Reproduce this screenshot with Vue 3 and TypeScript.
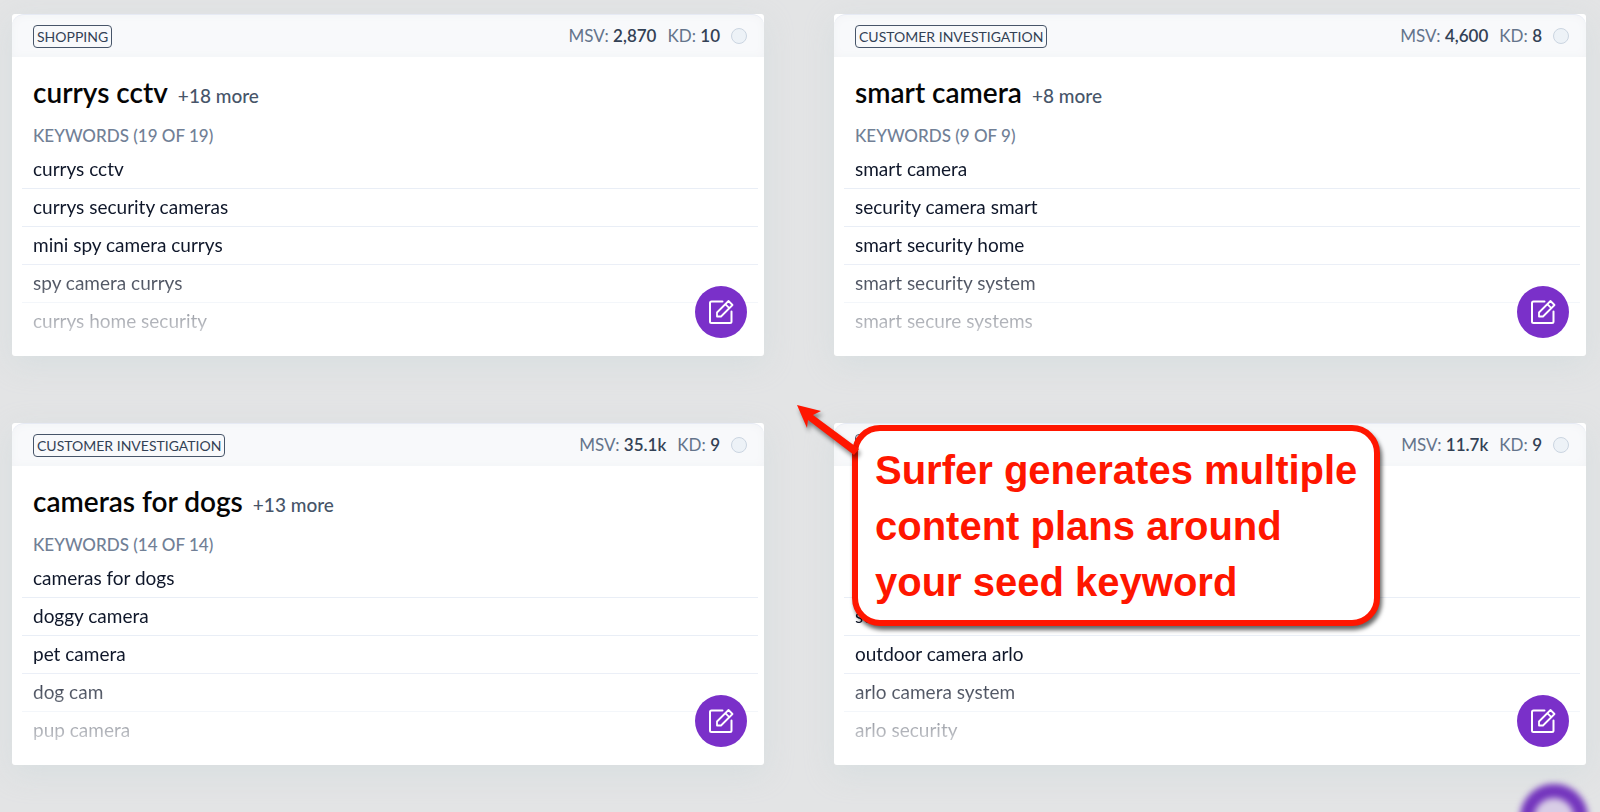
<script setup lang="ts">
interface Plan {
  id: number
  tag: string
  msv: string
  kd: string
  title: string
  more: string
  summary: string
  keywords: string[]
}

const plans: Plan[] = [
  {
    id: 1,
    tag: 'SHOPPING',
    msv: '2,870',
    kd: '10',
    title: 'currys cctv',
    more: '+18 more',
    summary: 'KEYWORDS (19 OF 19)',
    keywords: ['currys cctv', 'currys security cameras', 'mini spy camera currys', 'spy camera currys', 'currys home security'],
  },
  {
    id: 2,
    tag: 'CUSTOMER INVESTIGATION',
    msv: '4,600',
    kd: '8',
    title: 'smart camera',
    more: '+8 more',
    summary: 'KEYWORDS (9 OF 9)',
    keywords: ['smart camera', 'security camera smart', 'smart security home', 'smart security system', 'smart secure systems'],
  },
  {
    id: 3,
    tag: 'CUSTOMER INVESTIGATION',
    msv: '35.1k',
    kd: '9',
    title: 'cameras for dogs',
    more: '+13 more',
    summary: 'KEYWORDS (14 OF 14)',
    keywords: ['cameras for dogs', 'doggy camera', 'pet camera', 'dog cam', 'pup camera'],
  },
  {
    id: 4,
    tag: 'CUSTOMER INVESTIGATION',
    msv: '11.7k',
    kd: '9',
    title: '',
    more: '',
    summary: '',
    keywords: ['', 'security', 'outdoor camera arlo', 'arlo camera system', 'arlo security'],
  },
]
</script>

<template>
  <main class="page">
    <div class="plans">
      <div v-for="plan in plans" :key="plan.id" class="cell">
        <article class="card">
          <header class="head">
            <span class="tag">{{ plan.tag }}</span>
            <span class="stat first">MSV: <b>{{ plan.msv }}</b></span>
            <span class="stat">KD: <b>{{ plan.kd }}</b></span>
            <input class="pick" type="checkbox" :aria-label="'Select plan ' + plan.id" />
          </header>
          <div class="title">
            <h2 v-if="plan.title">{{ plan.title }}</h2>
            <span v-if="plan.more" class="more">{{ plan.more }}</span>
          </div>
          <p class="summary">{{ plan.summary }}</p>
          <ul class="keywords">
            <li v-for="(keyword, i) in plan.keywords" :key="i">{{ keyword }}</li>
          </ul>
          <button class="edit" type="button" aria-label="Edit plan">
            <svg viewBox="0 0 26 26" width="26" height="26" fill="none" stroke="#fff" stroke-width="2" stroke-linejoin="round" stroke-linecap="round">
              <path d="M14.500 2.500H3.500a1.500 1.500 0 0 0-1.500 1.500V22.500A1.500 1.500 0 0 0 3.500 24H22A1.500 1.500 0 0 0 23.500 22.500V12.500" />
              <path d="M9 17.500V13.500L20.500 2L24.500 6L13 17.500ZM17.300 5.200L21.300 9.200" stroke-width="1.800" />
            </svg>
          </button>
        </article>
        <aside v-if="plan.id === 4" class="callout">
          <svg class="arrow" viewBox="0 0 66 60" width="66" height="60" aria-hidden="true">
            <path d="M2 2L26 8L18 12L64 46L59 52L13 17L12 25Z" fill="#ff1600" />
          </svg>
          <p class="note">Surfer generates multiple<br />content plans around<br />your seed keyword</p>
        </aside>
      </div>
    </div>
    <div class="ring" aria-hidden="true"></div>
  </main>
</template>

<style>
body {
  margin: 0;
  background: #e3e4e5;
}
</style>

<style scoped>
.page {
  position: relative;
  box-sizing: border-box;
  min-height: 100vh;
  padding: 14px 14px 46px 12px;
  overflow: hidden;
  background: #e3e4e5;
  color: #0f172a;
  font-family: Lato, "Liberation Sans", sans-serif;
}
.plans {
  display: grid;
  grid-template-columns: 1fr 1fr;
  gap: 67px 70px;
}
.cell {
  position: relative;
}
.card {
  position: relative;
  box-sizing: border-box;
  height: 100%;
  padding-bottom: 15px;
  border-radius: 3px;
  background: #fff;
  box-shadow: 0 8px 30px rgba(190, 208, 212, 0.3);
}
.head {
  display: flex;
  align-items: center;
  box-sizing: border-box;
  height: 43px;
  padding: 0 17px 0 21px;
  border-top: 1px solid #e6eaf4;
  border-radius: 12px 12px 0 0;
  background: #f8f9fb;
  box-shadow: inset 0 0 8px #f1f3f5;
}
.tag {
  padding: 0 3px;
  border: 1px solid #475569;
  border-radius: 4px;
  color: #334155;
  font-size: 14px;
  line-height: 21px;
}
.stat {
  margin-left: 11px;
  color: #64748b;
  font-size: 17px;
  line-height: 20px;
}
.stat b {
  color: #334155;
  font-weight: 600;
}
.first {
  margin-left: auto;
}
.pick {
  width: 16px;
  height: 16px;
  margin: 0 0 0 11px;
  border: 1px solid #cbd5e1;
  border-radius: 50%;
  appearance: none;
  background: #edf2f7;
}
.title {
  display: flex;
  align-items: baseline;
  height: 32px;
  margin-top: 19px;
  padding: 0 21px;
}
.title h2 {
  margin: 0;
  color: #050505;
  font-size: 28px;
  font-weight: 600;
  line-height: 32px;
}
.more {
  margin-left: 10px;
  color: #475569;
  font-size: 19px;
  font-weight: 500;
  line-height: 32px;
}
.summary {
  height: 20px;
  margin: 18px 0 5px;
  padding: 0 21px;
  color: #718096;
  font-size: 17px;
  font-weight: 500;
  line-height: 20px;
}
.keywords {
  margin: 0 6px 0 10px;
  padding: 0;
  list-style: none;
  mask-image: linear-gradient(#000 106px, transparent 203px);
}
.keywords li {
  box-sizing: border-box;
  height: 38px;
  padding: 0 11px;
  border-bottom: 1px solid #e9eef6;
  font-size: 19px;
  line-height: 36px;
}
.keywords li:last-child {
  border-bottom: 0;
}
.edit {
  position: absolute;
  right: 17px;
  bottom: 18px;
  display: flex;
  align-items: center;
  justify-content: center;
  width: 52px;
  height: 52px;
  padding: 0;
  border: 0;
  border-radius: 50%;
  background: #7a30c9;
}
.callout {
  position: absolute;
  top: 2px;
  left: 18px;
  z-index: 1;
  box-sizing: border-box;
  padding: 11px 17px 10px;
  border: 6px solid #ff1600;
  border-radius: 28px;
  background: #fff;
  box-shadow: 2px 4px 4px rgba(0, 0, 0, 0.6);
}
.arrow {
  position: absolute;
  top: -28px;
  left: -63px;
  filter: drop-shadow(2px 4px 2px rgba(0, 0, 0, 0.45));
}
.note {
  margin: 0;
  color: #ff1600;
  font-family: "Arial Rounded MT Bold", "Liberation Sans", Arial, sans-serif;
  font-size: 40px;
  font-weight: 700;
  line-height: 56px;
  white-space: nowrap;
}
.ring {
  position: absolute;
  right: 12px;
  bottom: -40px;
  box-sizing: border-box;
  width: 68px;
  height: 68px;
  border: 14px solid #7334bd;
  border-radius: 50%;
  background: #d8cde6;
  filter: blur(3px);
}
</style>
